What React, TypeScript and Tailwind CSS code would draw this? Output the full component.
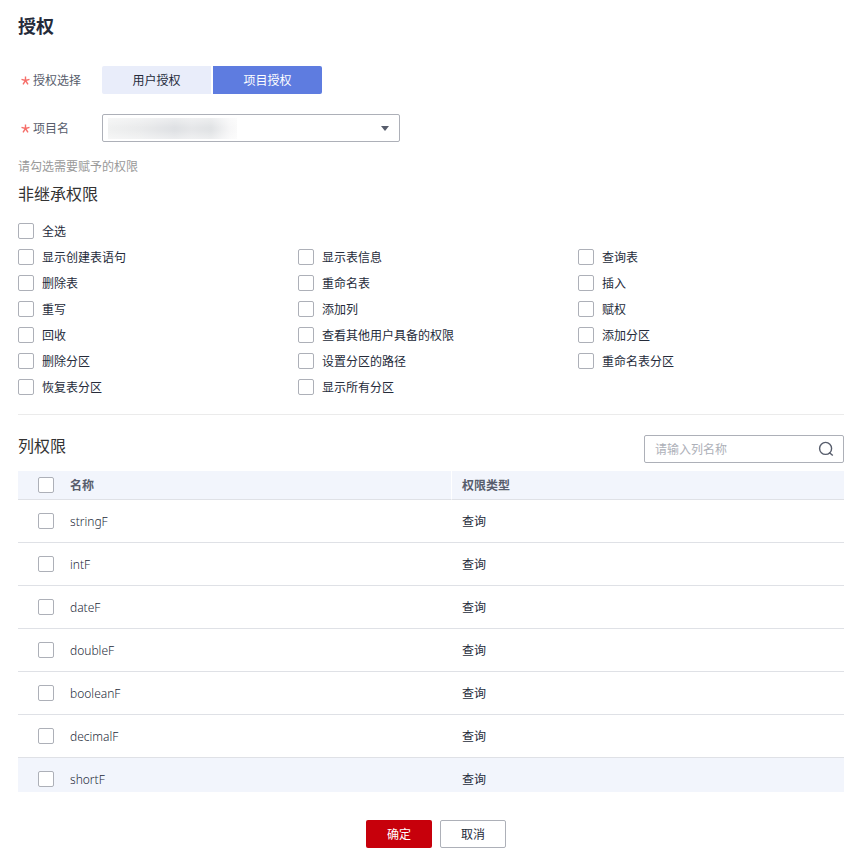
import { useState } from 'react';

const permissions = [
  '显示创建表语句', '显示表信息', '查询表',
  '删除表', '重命名表', '插入',
  '重写', '添加列', '赋权',
  '回收', '查看其他用户具备的权限', '添加分区',
  '删除分区', '设置分区的路径', '重命名表分区',
  '恢复表分区', '显示所有分区',
];

const columns = ['stringF', 'intF', 'dateF', 'doubleF', 'booleanF', 'decimalF', 'shortF'];

const boxClass =
  'block size-4 shrink-0 appearance-none rounded-xs border border-[#adb0b8] bg-white checked:border-[#5e7ce0] checked:bg-[#5e7ce0]';

function Required() {
  return (
    <svg viewBox="0 0 9 9" className="size-[9px] shrink-0" aria-hidden="true">
      <path d="M4.5 0.5v4M4.5 4.5L0.5 3.4M4.5 4.5l4-1.1M4.5 4.5L2 8.3M4.5 4.5l2.5 3.8" stroke="#f66f6a" strokeWidth="1.4" fill="none" />
    </svg>
  );
}

function Permission({ label }: { label: string }) {
  return (
    <label className="flex h-[26px] items-center gap-2">
      <input type="checkbox" className={boxClass} />
      {label}
    </label>
  );
}

export default function App() {
  const [mode, setMode] = useState('project');
  const tab = (active: boolean) => (active ? 'bg-[#5e7ce0] text-white' : 'bg-[#e9edfa] text-[#252b3a]');

  return (
    <main className="bg-white pt-3 pr-[6px] pb-[14px] pl-[18px] font-['Noto_Sans_CJK_SC',sans-serif] text-xs text-[#252b3a]">
      <h1 className="text-lg leading-[26px] font-bold">授权</h1>

      <div className="mt-7 flex h-7 items-center">
        <div id="mode" className="flex w-[84px] items-center gap-[3px] pl-[3px] text-[#575d6c]">
          <Required />
          授权选择
        </div>
        <div role="group" aria-labelledby="mode" className="flex gap-[2px]">
          <button type="button" onClick={() => setMode('user')} className={`h-7 w-[109px] rounded-l-xs ${tab(mode === 'user')}`}>
            用户授权
          </button>
          <button type="button" onClick={() => setMode('project')} className={`h-7 w-[109px] rounded-r-xs ${tab(mode === 'project')}`}>
            项目授权
          </button>
        </div>
      </div>

      <div className="mt-5 flex h-7 items-center">
        <label htmlFor="project" className="flex w-[84px] items-center gap-[3px] pl-[3px] text-[#575d6c]">
          <Required />
          项目名
        </label>
        <div className="relative w-[298px]">
          <select id="project" className="block h-7 w-full appearance-none rounded-xs border border-[#adb0b8] bg-white px-2" />
          <span className="pointer-events-none absolute top-1 left-[6px] h-[21px] w-[129px] bg-[linear-gradient(to_right,#f0f1f1_0%,#eaebec_25%,#dfe1e4_52%,#e6e7e9_65%,#e1e3e5_80%,#f6f6f7_94%,#fafafa_100%)]">
            <span className="block size-full bg-[linear-gradient(to_bottom,#ffffff66,#ffffff00_45%,#ffffff00_60%,#ffffff66)]" />
          </span>
          <svg viewBox="0 0 8 5" className="pointer-events-none absolute top-3 right-[11px] h-[5px] w-2" aria-hidden="true">
            <path d="M0 0h8L4 5z" fill="#575d6c" />
          </svg>
        </div>
      </div>

      <p className="mt-[14px] leading-5 text-[#999999]">请勾选需要赋予的权限</p>
      <h2 className="mt-1 text-base leading-[26px] text-[#333333]">非继承权限</h2>

      <div className="mt-3">
        <Permission label="全选" />
        <div className="grid grid-cols-[280px_280px_1fr]">
          {permissions.map((p) => (
            <Permission key={p} label={p} />
          ))}
        </div>
      </div>

      <hr className="mt-[14px] border-[#ebebeb]" />

      <div className="mt-5 flex h-7 items-start justify-between">
        <h2 className="text-base leading-5 text-[#333333]">列权限</h2>
        <div className="flex h-7 w-[200px] items-center rounded-xs border border-[#adb0b8] pr-[9px] pl-[10px]">
          <input type="search" aria-label="列名称" placeholder="请输入列名称" className="min-w-0 flex-1 outline-none placeholder:text-[#adb0b8]" />
          <svg viewBox="0 0 16 16" className="size-4" fill="none" stroke="#575d6c" strokeWidth="1.4" aria-hidden="true">
            <circle cx="7.6" cy="7.4" r="6" />
            <path d="M11.2 11.4l3.6 3.2" />
          </svg>
        </div>
      </div>

      <div className="mt-2 h-[321px] overflow-hidden">
        <table className="w-full table-fixed border-separate border-spacing-0 text-left">
          <thead>
            <tr className="h-[29px] bg-[#f2f5fc] text-[#575d6c]">
              <th className="w-[52px] border-b border-[#dfe1e6] p-0 pl-5">
                <input type="checkbox" aria-label="全选列" className={boxClass} />
              </th>
              <th className="border-b border-[#dfe1e6] p-0 font-bold">名称</th>
              <th className="w-[393px] border-b border-l border-b-[#dfe1e6] border-l-white p-0 pl-[10px] font-bold">权限类型</th>
            </tr>
          </thead>
          <tbody>
            {columns.map((c) => (
              <tr key={c} className="h-[43px] last:bg-[#f2f5fc]">
                <td className="border-b border-[#dfe1e6] p-0 pl-5">
                  <input type="checkbox" aria-label={c} className={boxClass} />
                </td>
                <td className="border-b border-[#dfe1e6] p-0">
                  <span className="font-['Noto_Sans',sans-serif] font-light">{c}</span>
                </td>
                <td className="border-b border-[#dfe1e6] p-0 pl-[11px]">查询</td>
              </tr>
            ))}
          </tbody>
        </table>
      </div>

      <div className="mt-7 flex justify-center gap-2 pl-[10px]">
        <button type="button" className="h-7 w-[66px] rounded-xs bg-[#c7000b] text-white">确定</button>
        <button type="button" className="h-7 w-[66px] rounded-xs border border-[#adb0b8] bg-white">取消</button>
      </div>
    </main>
  );
}
